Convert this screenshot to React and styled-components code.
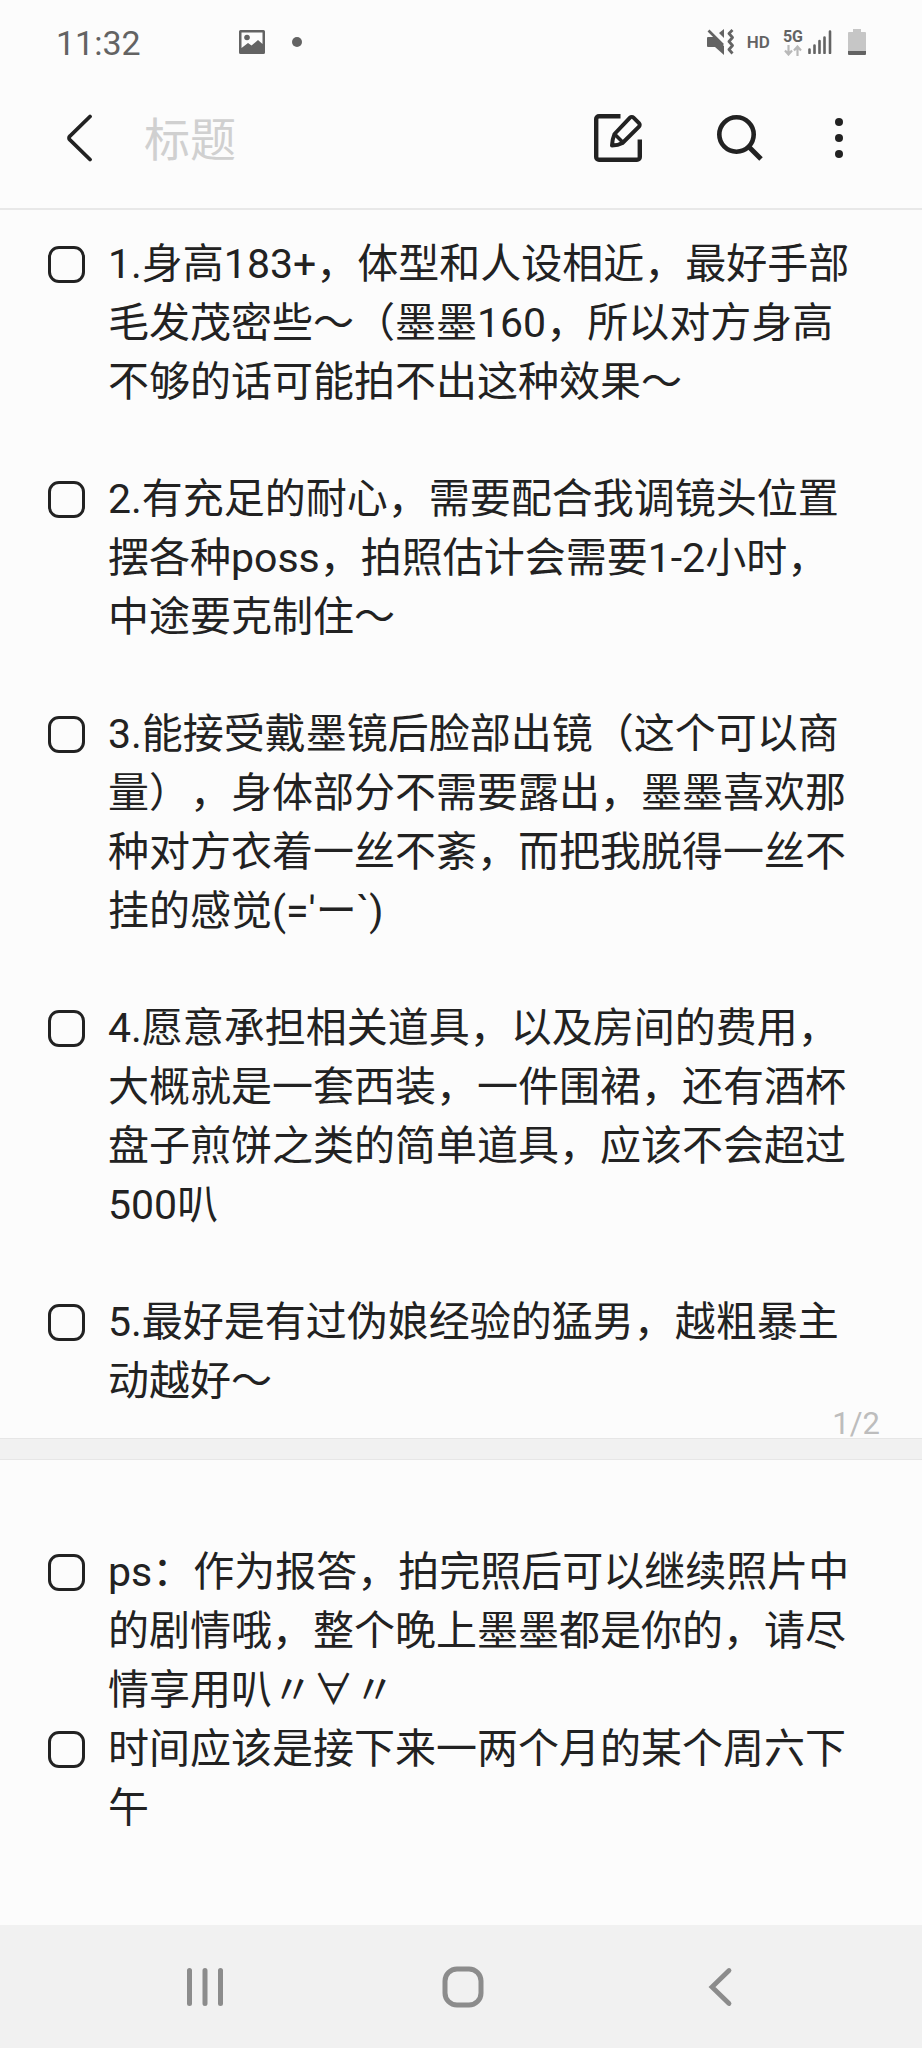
import { useState } from 'react';
import styled, { createGlobalStyle } from 'styled-components';

const pages = [
  {
    spaced: true,
    items: [
      '1.身高183+，体型和人设相近，最好手部毛发茂密些～（墨墨160，所以对方身高不够的话可能拍不出这种效果～',
      '2.有充足的耐心，需要配合我调镜头位置摆各种poss，拍照估计会需要1-2小时，中途要克制住～',
      "3.能接受戴墨镜后脸部出镜（这个可以商量），身体部分不需要露出，墨墨喜欢那种对方衣着一丝不紊，而把我脱得一丝不挂的感觉(='ー`)",
      '4.愿意承担相关道具，以及房间的费用，大概就是一套西装，一件围裙，还有酒杯盘子煎饼之类的简单道具，应该不会超过500叭',
      '5.最好是有过伪娘经验的猛男，越粗暴主动越好～',
    ],
  },
  {
    spaced: false,
    items: [
      'ps：作为报答，拍完照后可以继续照片中的剧情哦，整个晚上墨墨都是你的，请尽情享用叭〃∀〃',
      '时间应该是接下来一两个月的某个周六下午',
    ],
  },
];

const StatusBar = () => (
  <StyledStatusBar>
    <Clock>11:32</Clock>
    <Notifications>
      <svg width="26" height="24" viewBox="0 0 26 24">
        <path
          fill="#636363"
          fillRule="evenodd"
          d="M1.500 0h23a1.500 1.500 0 0 1 1.500 1.500v21a1.500 1.500 0 0 1-1.500 1.500h-23a1.500 1.500 0 0 1-1.500-1.500v-21a1.500 1.500 0 0 1 1.500-1.500zM2.500 2.500V18L9 13l3.500 2.500L19 10l4.500 4V2.500z"
        />
        <circle cx="8" cy="7.500" r="2.800" fill="#636363" />
      </svg>
      <svg width="10" height="10" viewBox="0 0 10 10">
        <circle cx="5" cy="5" r="5" fill="#636363" />
      </svg>
    </Notifications>
    <Indicators>
      <svg width="27" height="26" viewBox="0 0 27 26">
        <path fill="#636363" d="M1 8h7l9 9v9l-9-8H1a1 1 0 0 1-1-1V9a1 1 0 0 1 1-1zM17 0v9l-5-5z" />
        <path d="M1.500 1.500L16 16" stroke="#636363" strokeWidth="2.600" />
        <path
          d="M25.500 1l-3.500 3.500 3.500 4-3.500 4 3.500 4-3.500 4 3.500 4"
          fill="none"
          stroke="#636363"
          strokeWidth="2.800"
          strokeLinejoin="round"
        />
      </svg>
      <Hd>HD</Hd>
      <Network>
        <span>5G</span>
        <svg width="18" height="11" viewBox="0 0 18 11">
          <path
            d="M4.500 0v9M1 5.500l3.500 4 3.500-4M13.500 11V2M10 5.500l3.500-4 3.500 4"
            fill="none"
            stroke="#b9b9b9"
            strokeWidth="2.200"
          />
        </svg>
      </Network>
      <Signal width="24" height="24" viewBox="0 0 24 24">
        <path
          d="M1.500 19.500V23M6.500 15.500V23M11.500 11V23M16.500 7.500V23M22 1.500V23"
          stroke="#636363"
          strokeWidth="2.600"
          strokeLinecap="round"
        />
      </Signal>
      <svg width="18" height="26" viewBox="0 0 18 26">
        <path fill="#c6c6c6" d="M5 0h8v3h4a1 1 0 0 1 1 1v18H0V4a1 1 0 0 1 1-1h4z" />
        <path fill="#636363" d="M0 22h18v3a1 1 0 0 1-1 1H1a1 1 0 0 1-1-1z" />
      </svg>
    </Indicators>
  </StyledStatusBar>
);

const Toolbar = () => {
  const [title, setTitle] = useState('');

  return (
    <StyledToolbar>
      <IconButton type="button" aria-label="返回">
        <svg width="48" height="48" viewBox="0 0 48 48">
          <path
            d="M34 2.500L14 22a2.500 2.500 0 0 0 0 4L34 45.500"
            fill="none"
            stroke="#222"
            strokeWidth="3.800"
            strokeLinecap="round"
          />
        </svg>
      </IconButton>
      <TitleInput
        aria-label="标题"
        placeholder="标题"
        value={title}
        onChange={(e) => setTitle(e.target.value)}
      />
      <Actions>
        <IconButton type="button" aria-label="编辑" $apart>
          <svg width="48" height="48" viewBox="0 0 48 48" fill="none" stroke="#222">
            <path
              d="M26.500 2.200H5A2.800 2.800 0 0 0 2.200 5v38A2.800 2.800 0 0 0 5 45.800h38a2.800 2.800 0 0 0 2.800-2.800V25.500"
              strokeWidth="4.400"
            />
            <path
              d="M36 3.600a2.500 2.500 0 0 1 3.500 0l5.500 5.500a2.500 2.500 0 0 1 0 3.500L28.500 29c-3 1.600-6 2.400-10.500 2.500.2-4.500 1-8 2.500-11.500z"
              strokeWidth="4"
              strokeLinejoin="round"
            />
            <path d="M20.500 20l8 8" strokeWidth="3.600" />
          </svg>
        </IconButton>
        <IconButton type="button" aria-label="搜索">
          <svg width="48" height="48" viewBox="0 0 48 48" fill="none" stroke="#222">
            <circle cx="20.500" cy="20.500" r="17.200" strokeWidth="4.600" />
            <path d="M32.500 32.500L45 45" strokeWidth="5" />
          </svg>
        </IconButton>
        <IconButton type="button" aria-label="更多选项">
          <svg width="48" height="48" viewBox="0 0 48 48" fill="#222">
            <circle cx="24" cy="8" r="4" />
            <circle cx="24" cy="24" r="4" />
            <circle cx="24" cy="40" r="4" />
          </svg>
        </IconButton>
      </Actions>
    </StyledToolbar>
  );
};

const NavBar = () => (
  <StyledNavBar>
    <NavButton type="button" aria-label="最近任务">
      <svg width="48" height="48" viewBox="0 0 48 48">
        <path
          d="M8.500 7.500v33M24 7.500v33M39.500 7.500v33"
          stroke="#8c8c8c"
          strokeWidth="5"
          strokeLinecap="round"
        />
      </svg>
    </NavButton>
    <NavButton type="button" aria-label="主屏幕">
      <svg width="48" height="48" viewBox="0 0 48 48">
        <rect x="6" y="6" width="36" height="36" rx="12" fill="none" stroke="#8c8c8c" strokeWidth="5" />
      </svg>
    </NavButton>
    <NavButton type="button" aria-label="后退">
      <svg width="48" height="48" viewBox="0 0 48 48">
        <path
          d="M33 7.500L16 24l17 16.500"
          fill="none"
          stroke="#8c8c8c"
          strokeWidth="4.800"
          strokeLinecap="round"
        />
      </svg>
    </NavButton>
  </StyledNavBar>
);

const App = () => (
  <Screen>
    <GlobalStyle />
    <StatusBar />
    <Toolbar />
    <Note>
      {pages.map((page, p) => (
        <Page key={p} $first={p === 0}>
          <List $spaced={page.spaced}>
            {page.items.map((text, i) => (
              <li key={i}>
                <Item>
                  <Checkbox type="checkbox" />
                  <span>{text}</span>
                </Item>
              </li>
            ))}
          </List>
          {p < pages.length - 1 && (
            <PageNumber>
              {p + 1}/{pages.length}
            </PageNumber>
          )}
        </Page>
      ))}
    </Note>
    <NavBar />
  </Screen>
);

const GlobalStyle = createGlobalStyle`
  * {
    box-sizing: border-box;
  }

  body {
    margin: 0;
    background: #fcfcfc;
    color: #222;
    font-family: Roboto, "Noto Sans CJK SC", sans-serif;
  }

  svg {
    display: block;
    flex-shrink: 0;
  }
`;

const Screen = styled.div`
  display: flex;
  flex-direction: column;
  min-height: 100vh;
`;

const StyledStatusBar = styled.header`
  display: flex;
  align-items: center;
  height: 84px;
  padding: 0 56px;
  color: #636363;
`;

const Clock = styled.time`
  padding-top: 2px;
  font-size: 34px;
  line-height: 40px;
`;

const Notifications = styled.div`
  display: flex;
  align-items: center;
  gap: 27px;
  margin-left: 98px;
`;

const Indicators = styled.div`
  display: flex;
  align-items: center;
  margin-left: auto;
`;

const Hd = styled.span`
  margin: 0 13px;
  font-size: 17px;
  font-weight: 600;
  line-height: 20px;
`;

const Network = styled.div`
  display: flex;
  flex-direction: column;
  align-items: center;
  font-size: 16px;
  font-weight: 700;
  line-height: 16px;
`;

const Signal = styled.svg`
  margin: 0 16px 0 5px;
`;

const StyledToolbar = styled.div`
  display: flex;
  align-items: center;
  height: 126px;
  padding: 0 59px 16px 56px;
  border-bottom: 2px solid #e8e8e8;
`;

const IconButton = styled.button`
  flex-shrink: 0;
  margin: 0 ${(props) => (props.$apart ? '23px' : '0')} 0 0;
  padding: 0;
  border: 0;
  background: none;
  cursor: pointer;
`;

const TitleInput = styled.input`
  flex: 1;
  min-width: 0;
  margin-left: 40px;
  padding: 4px 0 0;
  border: 0;
  outline: 0;
  background: none;
  color: #222;
  font: 400 46px/60px Roboto, "Noto Sans CJK SC", sans-serif;

  &::placeholder {
    color: #d0d0d0;
    opacity: 1;
  }
`;

const Actions = styled.div`
  display: flex;
  gap: 51px;
`;

const Note = styled.main`
  flex: 1;
`;

const Page = styled.section`
  padding: ${(props) => (props.$first ? '25px' : '83px')} 56px 0 48px;

  & + & {
    border-top: 1px solid #e6e6e6;
  }

  &:not(:last-child) {
    border-bottom: 1px solid #e6e6e6;
  }

  &:not(:last-child) + & {
    margin-top: 20px;
    box-shadow: 0 -20px 0 #f1f1f1;
  }
`;

const List = styled.ul`
  display: flex;
  flex-direction: column;
  gap: ${(props) => (props.$spaced ? '58px' : '0')};
  margin: 0;
  padding: 0;
  list-style: none;
`;

const Item = styled.label`
  display: grid;
  grid-template-columns: 37px 1fr;
  column-gap: 23px;
  font-size: 41px;
  line-height: 59px;
  text-spacing-trim: space-all;
`;

const Checkbox = styled.input`
  appearance: none;
  width: 37px;
  height: 37px;
  margin: 11px 0;
  border: 3px solid #222;
  border-radius: 11px;

  &:checked {
    background: #222;
  }
`;

const PageNumber = styled.div`
  margin-right: -14px;
  padding-bottom: 2px;
  color: #bdbdbd;
  font-size: 31px;
  line-height: 25px;
  text-align: right;
`;

const StyledNavBar = styled.nav`
  display: flex;
  align-items: center;
  height: 123px;
  padding: 0 73px 0 76px;
  background: #f1f1f1;
`;

const NavButton = styled.button`
  display: flex;
  flex: 1;
  justify-content: center;
  padding: 0;
  border: 0;
  background: none;
  cursor: pointer;
`;

export default App;
